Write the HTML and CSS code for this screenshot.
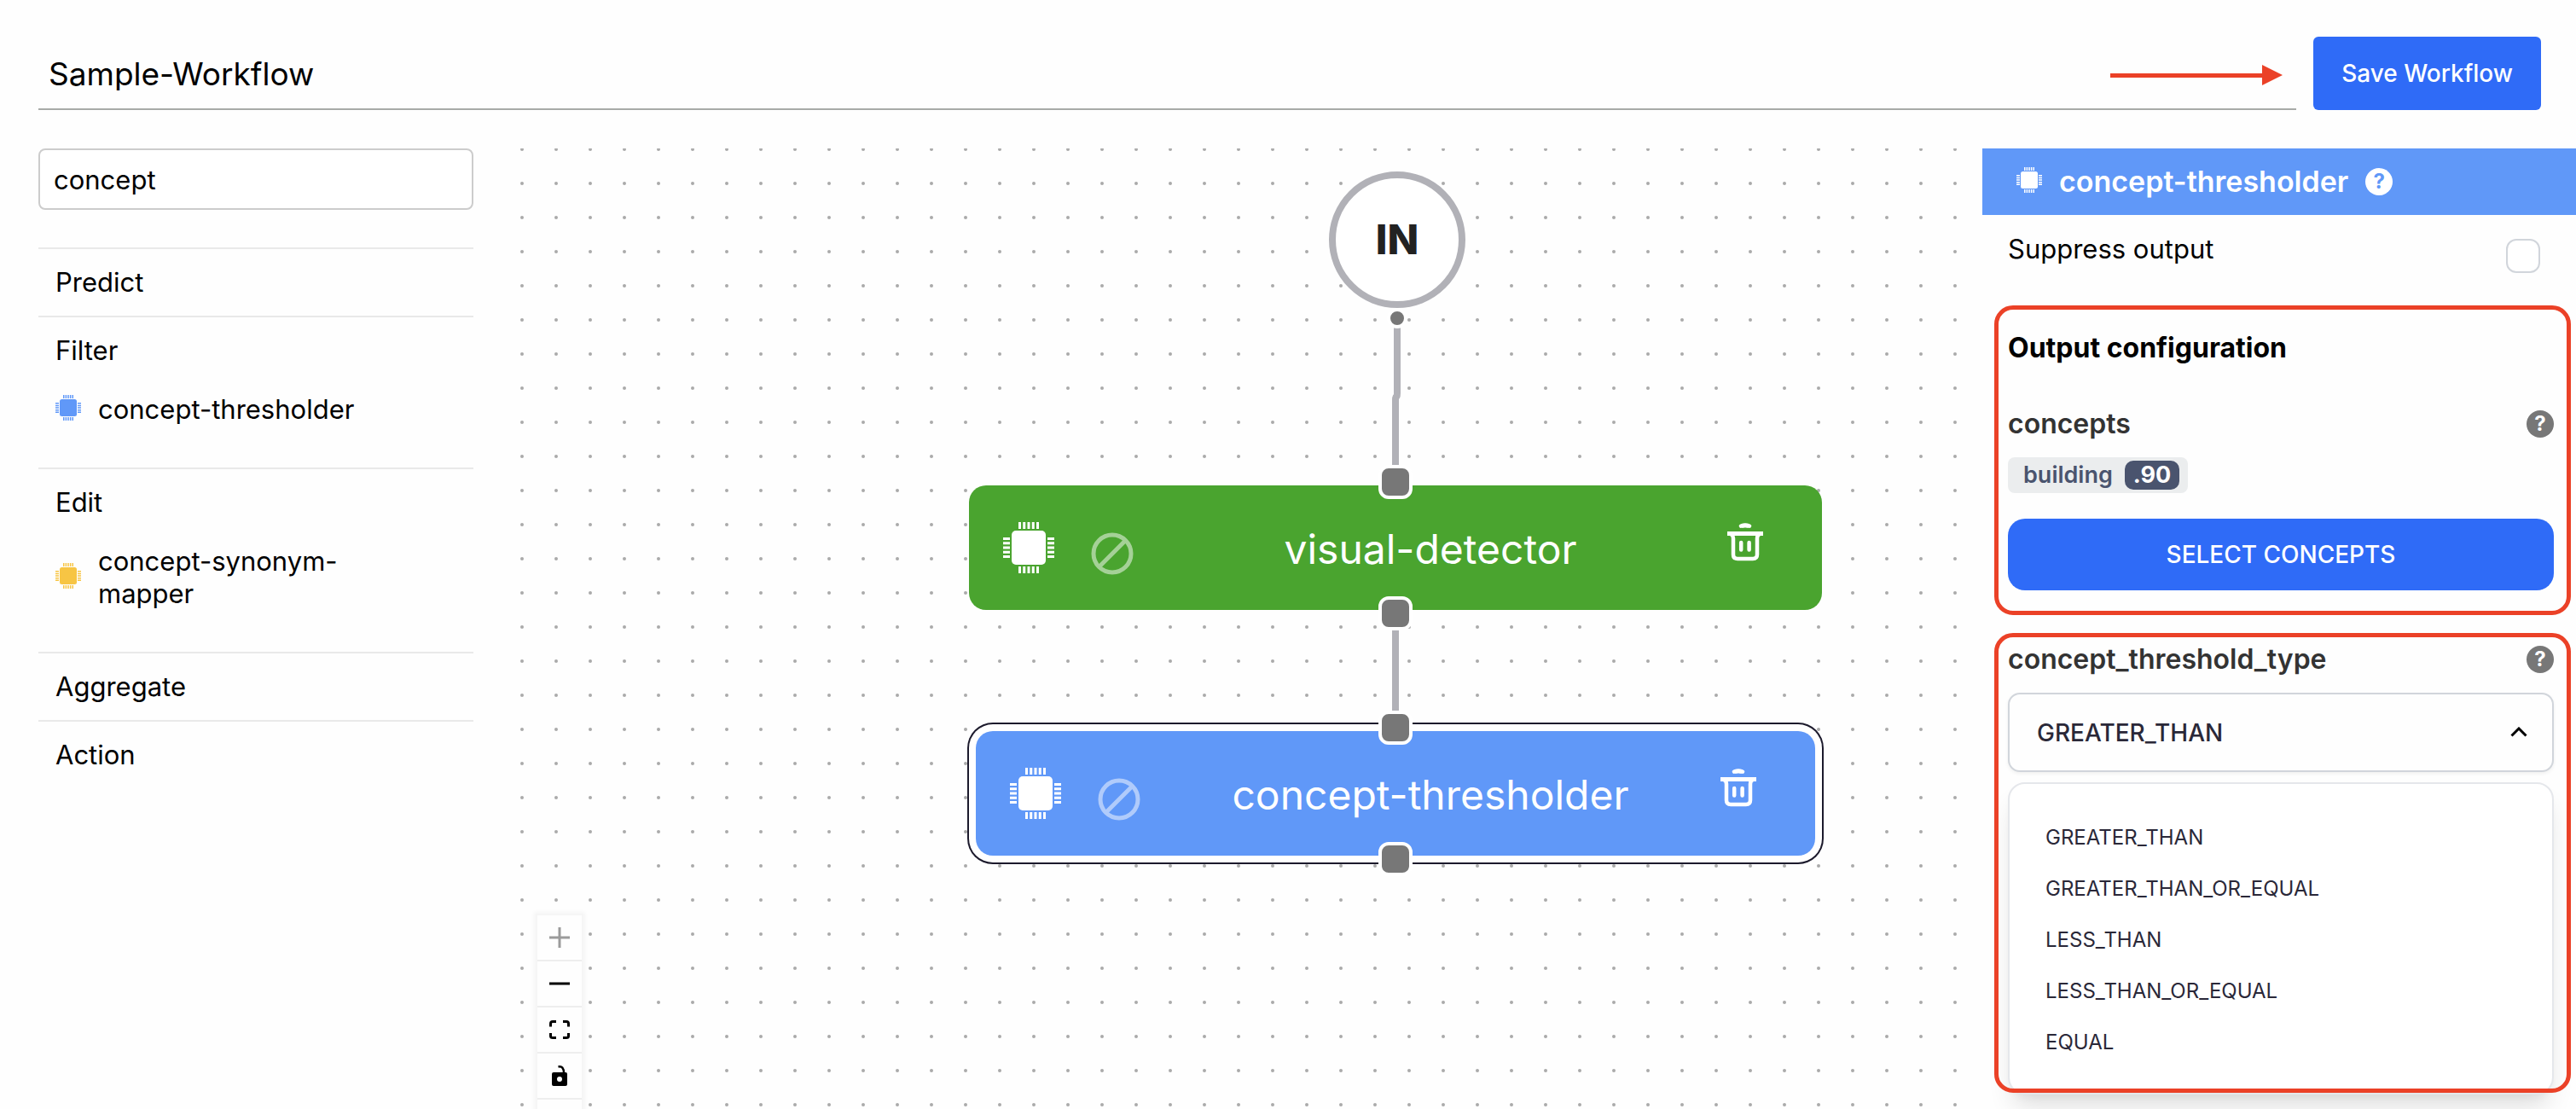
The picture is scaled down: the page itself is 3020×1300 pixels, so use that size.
FILE: index.html
```html
<!DOCTYPE html>
<html lang="en">
<head>
<meta charset="utf-8">
<meta name="viewport" content="width=device-width, initial-scale=1">
<title>Sample-Workflow</title>
<link rel="stylesheet" href="styles.css">
</head>
<body>
<svg class="sprite" aria-hidden="true">
  <symbol id="chip" viewBox="0 0 60 60">
    <rect x="10" y="10" width="40" height="40" rx="5"/>
    <path d="M19.5 0v8M24.75 0v8M30 0v8M35.25 0v8M40.5 0v8M19.5 52v8M24.75 52v8M30 52v8M35.25 52v8M40.5 52v8M0 19.5h8M0 24.75h8M0 30h8M0 35.25h8M0 40.5h8M52 19.5h8M52 24.75h8M52 30h8M52 35.25h8M52 40.5h8" stroke="currentColor" stroke-width="3"/>
  </symbol>
  <symbol id="ban" viewBox="0 0 50 50">
    <circle cx="25" cy="25" r="22" fill="none" stroke="currentColor" stroke-width="5"/>
    <path d="M40 10L10 40" stroke="currentColor" stroke-width="5"/>
  </symbol>
  <symbol id="trash" viewBox="0 0 42 46">
    <path d="M0 12.500h42M16.500 3.500Q21 2 25.500 3.500" fill="none" stroke="currentColor" stroke-width="5"/>
    <path d="M16 3.600Q21 2.200 26 3.600M16.200 23v8.500M25.600 23v8.500" fill="none" stroke="currentColor" stroke-width="4.500" stroke-linecap="round"/>
    <path d="M4 13q3 1 3 5v19q0 5 5 5h18q5 0 5-5V18q0-4 3-5" fill="none" stroke="currentColor" stroke-width="4.500"/>
  </symbol>
</svg>

<header class="topbar">
  <div class="title-field">
    <input class="title-input" type="text" value="Sample-Workflow" aria-label="Workflow name">
    <svg class="arrow" viewBox="0 0 202 24" aria-hidden="true"><path d="M0 10h178V0l24 12-24 12v-9H0z"/></svg>
  </div>
  <button class="btn save" type="button">Save Workflow</button>
</header>

<main class="workspace">
  <aside class="sidebar">
    <input class="search" type="text" value="concept" aria-label="Search operators">
    <section class="group">
      <h2 class="group-title">Predict</h2>
    </section>
    <section class="group">
      <h2 class="group-title">Filter</h2>
      <ul class="items">
        <li class="item"><svg class="chip-small chip-blue"><use href="#chip"/></svg><span>concept-thresholder</span></li>
      </ul>
    </section>
    <section class="group">
      <h2 class="group-title">Edit</h2>
      <ul class="items">
        <li class="item"><svg class="chip-small chip-yellow"><use href="#chip"/></svg><span>concept-synonym-mapper</span></li>
      </ul>
    </section>
    <section class="group">
      <h2 class="group-title">Aggregate</h2>
    </section>
    <section class="group">
      <h2 class="group-title">Action</h2>
    </section>
  </aside>

  <section class="canvas" aria-label="Workflow graph">
    <svg class="canvas-layer">
      <defs>
        <pattern id="dots" x="-8" y="-19" width="40" height="40" patternUnits="userSpaceOnUse"><circle cx="20" cy="20" r="2" fill="#aaa"/></pattern>
      </defs>
      <rect width="100%" height="100%" fill="url(#dots)"/>
      <path class="edge" d="M1038 200V287Q1038 291 1037 291T1036 295V380M1036 560V665"/>
    </svg>

    <div class="node-in">IN<span class="handle-in"></span></div>

    <div class="node node-green">
      <span class="handle handle-top"></span>
      <svg class="node-chip"><use href="#chip"/></svg>
      <svg class="node-ban"><use href="#ban"/></svg>
      <span class="node-name">visual-detector</span>
      <button class="node-delete" type="button" aria-label="Delete visual-detector"><svg class="node-trash"><use href="#trash"/></svg></button>
      <span class="handle handle-bottom"></span>
    </div>

    <div class="node node-blue">
      <span class="handle handle-top"></span>
      <svg class="node-chip"><use href="#chip"/></svg>
      <svg class="node-ban"><use href="#ban"/></svg>
      <span class="node-name">concept-thresholder</span>
      <button class="node-delete" type="button" aria-label="Delete concept-thresholder"><svg class="node-trash"><use href="#trash"/></svg></button>
      <span class="handle handle-bottom"></span>
    </div>

    <div class="controls">
      <button class="control" type="button" aria-label="Zoom in" disabled><svg class="control-icon" viewBox="0 0 24 24"><path d="M12 0v24M0 12h24" stroke="currentColor" stroke-width="3"/></svg></button>
      <button class="control" type="button" aria-label="Zoom out"><svg class="control-icon" viewBox="0 0 24 24"><path d="M0 12h24" stroke="currentColor" stroke-width="3"/></svg></button>
      <button class="control" type="button" aria-label="Fit view"><svg class="control-icon" viewBox="0 0 24 24"><path d="M1.500 8.500V5q0-2.500 2.500-2.500h4M16 2.500h4q2.500 0 2.500 2.500v3.500M22.500 16v3.500q0 2-2.500 2h-4M8 21.500H4q-2.500 0-2.500-2V16" fill="none" stroke="currentColor" stroke-width="3"/></svg></button>
      <button class="control" type="button" aria-label="Toggle interactivity"><svg class="control-icon" viewBox="0 0 24 24"><path d="M5 8h14q2 0 2 2v12q0 2-2 2H5q-2 0-2-2V10q0-2 2-2zm7 5a2.500 2.500 0 1 0 0 6 2.500 2.500 0 0 0 0-6z" fill="currentColor" fill-rule="evenodd"/><path d="M10.500 1.500Q17 0 17 9" fill="none" stroke="currentColor" stroke-width="2.500"/></svg></button>
      <button class="control" type="button" aria-label="Auto layout"></button>
    </div>
  </section>

  <aside class="panel">
    <header class="panel-header">
      <svg class="chip-small"><use href="#chip"/></svg>
      <h2 class="panel-title">concept-thresholder</h2>
      <button class="help help-light" type="button" aria-label="About concept-thresholder">?</button>
    </header>

    <div class="suppress">
      <label class="suppress-label" for="suppress">Suppress output</label>
      <input class="checkbox" type="checkbox" id="suppress">
    </div>

    <section class="card card-output">
      <h3 class="card-title">Output configuration</h3>
      <div class="field">
        <h4 class="field-name">concepts</h4>
        <button class="help" type="button" aria-label="About concepts">?</button>
      </div>
      <div class="tag">building<span class="tag-value">.90</span></div>
      <button class="btn select-concepts" type="button">SELECT CONCEPTS</button>
    </section>

    <section class="card card-threshold">
      <div class="field">
        <label class="field-name" for="threshold-type">concept_threshold_type</label>
        <button class="help" type="button" aria-label="About concept_threshold_type">?</button>
      </div>
      <div class="select-wrap">
        <select class="select" id="threshold-type">
          <option>GREATER_THAN</option>
          <option>GREATER_THAN_OR_EQUAL</option>
          <option>LESS_THAN</option>
          <option>LESS_THAN_OR_EQUAL</option>
          <option>EQUAL</option>
        </select>
        <svg class="chevron" viewBox="0 0 20 12"><path d="M1.500 10.500L10 2l8.500 8.500" fill="none" stroke="currentColor" stroke-width="3"/></svg>
      </div>
      <ul class="menu" role="listbox" aria-label="concept_threshold_type">
        <li class="menu-option" role="option" aria-selected="true">GREATER_THAN</li>
        <li class="menu-option" role="option">GREATER_THAN_OR_EQUAL</li>
        <li class="menu-option" role="option">LESS_THAN</li>
        <li class="menu-option" role="option">LESS_THAN_OR_EQUAL</li>
        <li class="menu-option" role="option">EQUAL</li>
      </ul>
    </section>
  </aside>
</main>
</body>
</html>
```
FILE: styles.css
```css
:root {
  --blue: #2f6bf7;
  --light-blue: #6098f8;
  --green: #4aa42f;
  --mark: #eb4127;
  --edge: #b1b1b7;
  --handle: #777;
}

* { box-sizing: border-box; }

body {
  margin: 0;
  min-height: 100vh;
  display: flex;
  flex-direction: column;
  overflow-x: hidden;
  background: #fefefe;
  color: #000;
  font: 400 31px/38px Inter, "Liberation Sans", sans-serif;
}

h2, h3, h4, ul { margin: 0; padding: 0; font: inherit; }
ul { list-style: none; }
button, input, select { font: inherit; color: inherit; }
button { border: 0; padding: 0; background: none; }
svg { display: block; flex: none; }

.sprite { position: absolute; width: 0; height: 0; }

/* Top bar */
.topbar {
  display: flex;
  gap: 20px;
  padding: 43px 41px 45px 45px;
}

.title-field { position: relative; flex: 1; display: flex; }

.title-input {
  flex: 1;
  min-width: 0;
  border: 0;
  border-bottom: 2px solid #a8aaa8;
  padding: 3px 12px 0;
  background: none;
  font-size: 37px;
}

.arrow {
  position: absolute;
  top: 33px;
  right: 16px;
  width: 202px;
  height: 24px;
  fill: var(--mark);
}

.btn {
  background: var(--blue);
  color: #fff;
  font-size: 28px;
  font-weight: 500;
}

.save { height: 86px; padding: 0 33px; border-radius: 6px; }

/* Workspace */
.workspace {
  flex: 1;
  display: grid;
  grid-template-columns: 600px 1fr 696px;
}

.sidebar { padding: 0 45px; }

.search {
  display: block;
  width: 100%;
  height: 72px;
  margin-bottom: 44px;
  padding: 0 16px;
  border: 2px solid #ccc;
  border-radius: 8px;
  background: #fff;
}

.group { border-top: 2px solid #e9e9e9; }
.group-title { padding: 20px; }
.items { padding: 11px 80px 49px 20px; }
.item { display: flex; align-items: center; gap: 20px; }

.chip-small { width: 30px; height: 30px; margin-bottom: 4px; fill: currentColor; }
.chip-blue { color: var(--light-blue); }
.chip-yellow { color: #f7c544; }

/* Graph canvas */
.canvas { position: relative; overflow: hidden; }
.canvas-layer { position: absolute; inset: 0; width: 100%; height: 100%; }
.edge { fill: none; stroke: var(--edge); stroke-width: 8px; }

.node-in {
  position: absolute;
  left: 958px;
  top: 27px;
  width: 160px;
  height: 160px;
  display: grid;
  place-items: center;
  border: 8px solid var(--edge);
  border-radius: 50%;
  background: #fff;
  color: #222;
  font-size: 48px;
  font-weight: 800;
}

.handle-in {
  position: absolute;
  left: 60px;
  bottom: -32px;
  width: 24px;
  height: 24px;
  border: 4px solid #fff;
  border-radius: 50%;
  background: var(--handle);
}

.node {
  position: absolute;
  height: 146px;
  display: flex;
  align-items: center;
  padding: 0 69px 0 40px;
  border-radius: 20px;
  color: #fff;
}

.node-green { left: 536px; top: 395px; width: 1000px; background: var(--green); }

.node-blue {
  left: 544px;
  top: 683px;
  width: 984px;
  background: var(--light-blue);
  box-shadow: 0 0 0 8px #fff, 0 0 0 10px #1c1a2c;
}

.node-chip { width: 60px; height: 60px; margin-right: 43px; fill: currentColor; }
.node-ban { width: 50px; height: 50px; margin-top: 14px; opacity: .5; }
.node-name { flex: 1; padding-top: 3px; text-align: center; font-size: 48px; }
.node-delete { margin-bottom: 12px; }
.node-trash { width: 42px; height: 46px; }

.handle {
  position: absolute;
  left: calc(50% - 20px);
  width: 40px;
  height: 40px;
  border: 4px solid #fff;
  border-radius: 12px;
  background: var(--handle);
}

.handle-top { top: -24px; }
.handle-bottom { bottom: -24px; }

.controls {
  position: absolute;
  left: 30px;
  top: 899px;
  width: 52px;
  box-shadow: 0 0 4px 4px rgba(0, 0, 0, .04);
}

.control {
  display: grid;
  place-items: center;
  width: 52px;
  height: 54px;
  border-bottom: 2px solid #eee;
  background: #fefefe;
}

.control:disabled { color: #9b9b9b; }
.control-icon { width: 24px; height: 24px; }

/* Settings panel */
.panel-header {
  display: flex;
  align-items: center;
  gap: 20px;
  height: 78px;
  padding: 0 40px;
  background: var(--light-blue);
  color: #fff;
}

.panel-title { font-size: 34px; font-weight: 600; }

.help {
  flex: none;
  width: 32px;
  height: 32px;
  border-radius: 50%;
  background: var(--handle);
  color: #fff;
  font-size: 24px;
  font-weight: 700;
  line-height: 32px;
}

.help-light { background: #fff; color: var(--light-blue); }

.suppress {
  display: flex;
  align-items: flex-start;
  justify-content: space-between;
  padding: 21px 42px 38px 30px;
}

.checkbox {
  appearance: none;
  width: 40px;
  height: 40px;
  margin: 7px 0 0;
  border: 2px solid #d1d5db;
  border-radius: 12px;
  background: #fff;
}

.card { position: relative; margin: 0 6px 21px 14px; padding: 0 20px 0 16px; }

.card::after {
  content: "";
  position: absolute;
  inset: 0;
  border: 5px solid var(--mark);
  border-radius: 22px;
  pointer-events: none;
}

.card-output { padding-top: 30px; padding-bottom: 29px; }
.card-threshold { margin-bottom: 17px; padding-top: 11px; }
.card-threshold::after { bottom: 2px; }

.card-title {
  margin-bottom: 49px;
  font-size: 32px;
  font-weight: 700;
  line-height: 40px;
}

.field {
  display: flex;
  align-items: center;
  justify-content: space-between;
  margin-bottom: 19px;
}

.field-name {
  color: #333;
  font-size: 32px;
  font-weight: 600;
  line-height: 40px;
}

.tag {
  display: flex;
  align-items: center;
  gap: 14px;
  width: max-content;
  height: 42px;
  margin-bottom: 30px;
  padding: 0 10px 0 18px;
  border-radius: 8px;
  background: #ebedee;
  color: #4a546e;
  font-size: 27px;
  font-weight: 600;
}

.tag-value {
  padding: 0 10px;
  border-radius: 10px;
  background: #4a546e;
  color: #fff;
  font-weight: 700;
  line-height: 34px;
}

.select-concepts { display: block; width: 100%; height: 84px; border-radius: 20px; }

.select-wrap { position: relative; margin-bottom: 12px; }

.select {
  display: block;
  appearance: none;
  width: 100%;
  height: 93px;
  padding: 0 32px;
  border: 2px solid #d1d5db;
  border-radius: 14px;
  background: #fefefe;
  box-shadow: 0 2px 4px rgba(0, 0, 0, .06);
  color: #2a2838;
  font-size: 28px;
  font-weight: 500;
}

.chevron {
  position: absolute;
  top: 40px;
  right: 31px;
  width: 20px;
  height: 12px;
  pointer-events: none;
}

.menu {
  padding: 33px 42px 29px;
  border: 2px solid #e5e7eb;
  border-radius: 20px;
  background: #fff;
  box-shadow: 0 20px 30px -6px rgba(0, 0, 0, .12), 0 8px 12px -6px rgba(0, 0, 0, .06);
  color: #2a2838;
  font-size: 24px;
}

.menu-option { line-height: 60px; }
```
